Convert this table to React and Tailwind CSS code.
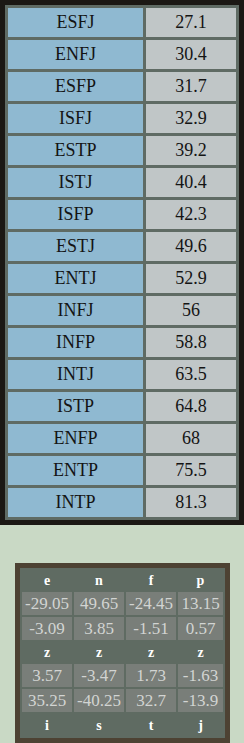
import React from 'react';

const types = [
  ['ESFJ', '27.1'],
  ['ENFJ', '30.4'],
  ['ESFP', '31.7'],
  ['ISFJ', '32.9'],
  ['ESTP', '39.2'],
  ['ISTJ', '40.4'],
  ['ISFP', '42.3'],
  ['ESTJ', '49.6'],
  ['ENTJ', '52.9'],
  ['INFJ', '56'],
  ['INFP', '58.8'],
  ['INTJ', '63.5'],
  ['ISTP', '64.8'],
  ['ENFP', '68'],
  ['ENTP', '75.5'],
  ['INTP', '81.3'],
];

const top = ['e', 'n', 'f', 'p'];
const mid = ['z', 'z', 'z', 'z'];
const bottom = ['i', 's', 't', 'j'];
const rowsA = [
  ['-29.05', '49.65', '-24.45', '13.15'],
  ['-3.09', '3.85', '-1.51', '0.57'],
];
const rowsB = [
  ['3.57', '-3.47', '1.73', '-1.63'],
  ['35.25', '-40.25', '32.7', '-13.9'],
];

const serif = { fontFamily: '"Liberation Serif", "Times New Roman", serif' };

const Label = ({ children }) => (
  <div className="flex items-center justify-center text-[14px] font-bold text-white">{children}</div>
);

const Num = ({ children }) => (
  <div className="flex items-center justify-center bg-[#797e79] text-[17px] text-[#d2d4d2]">{children}</div>
);

export default function App() {
  return (
    <div className="w-[244px] min-h-[743px] bg-[#c9d9c5]" style={serif}>
      {/* ranking table */}
      <div className="border-[5px] border-[#1b1814] bg-[#5f6b64] p-[3px]">
        <div className="grid grid-cols-[135px_90px] gap-[3px]">
          {types.map(([t, v]) => (
            <React.Fragment key={t}>
              <div className="flex h-[29px] items-center justify-center bg-[#8fb9d1] text-[18px] text-[#141414]">
                {t}
              </div>
              <div className="flex h-[29px] items-center justify-center bg-[#c0c6c7] text-[18px] text-[#141414]">
                {v}
              </div>
            </React.Fragment>
          ))}
        </div>
      </div>

      {/* dimension scores */}
      <div className="ml-[15px] mt-[38px] w-[215px] border-[5px] border-[#4d4233] bg-[#5f6b62] p-[2px]">
        <div className="grid grid-cols-[50px_50px_50px_45px] grid-rows-[20px_23px_23px_20px_23px_23px_22px] gap-[2px]">
          {top.map((l, i) => <Label key={'t' + i}>{l}</Label>)}
          {rowsA.map((r, i) => r.map((v, j) => <Num key={'a' + i + j}>{v}</Num>))}
          {mid.map((l, i) => <Label key={'m' + i}>{l}</Label>)}
          {rowsB.map((r, i) => r.map((v, j) => <Num key={'b' + i + j}>{v}</Num>))}
          {bottom.map((l, i) => <Label key={'b' + i}>{l}</Label>)}
        </div>
      </div>
    </div>
  );
}
